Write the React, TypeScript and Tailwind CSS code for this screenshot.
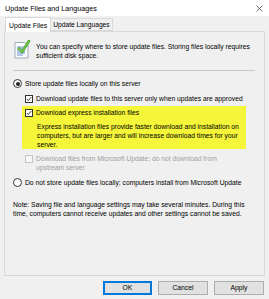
function DocIcon() {
  return (
    <svg width="18" height="20" viewBox="0 0 18 20">
      <path d="M2 3.5h10l3 3V19H2z" fill="#fbfcfd" stroke="#8a97a6" strokeWidth="0.8" />
      <path d="M4 8h8M4 10h8M4 12h8M4 14h8M4 16h6" stroke="#5a86c6" strokeWidth="0.9" />
      <path d="M6 9.5l3 3.5 7-11" fill="none" stroke="#3a9a2a" strokeWidth="2.6" strokeLinecap="round" strokeLinejoin="round" />
      <path d="M6 9.5l3 3.5 7-11" fill="none" stroke="#7fd34e" strokeWidth="1.2" strokeLinecap="round" strokeLinejoin="round" />
    </svg>
  );
}

function Check({ disabled = false }: { disabled?: boolean }) {
  return (
    <span
      className={`w-[8px] h-[8px] shrink-0 border flex items-center justify-center ${
        disabled ? "border-[#c4c4c4] bg-[#f7f7f7]" : "border-[#333] bg-white"
      }`}
    />
  );
}

function Checked() {
  return (
    <span className="w-[8px] h-[8px] shrink-0 border border-[#333] bg-white flex items-center justify-center">
      <svg width="6" height="6" viewBox="0 0 6 6">
        <path d="M0.8 3l1.5 1.6L5.3 1" fill="none" stroke="#222" strokeWidth="0.9" />
      </svg>
    </span>
  );
}

function Radio({ on }: { on?: boolean }) {
  return (
    <span className="w-[9px] h-[9px] shrink-0 rounded-full border border-[#333] bg-white flex items-center justify-center">
      {on && <span className="w-[4px] h-[4px] rounded-full bg-[#222]" />}
    </span>
  );
}

export default function App() {
  return (
    <div className="w-[269px] h-[299px] bg-[#f0f0f0] font-['Liberation_Sans',sans-serif] text-[6.75px] leading-[9px] text-black flex flex-col overflow-hidden">
      {/* Title bar */}
      <div className="h-[16px] bg-white flex items-center justify-between pl-[5px] pr-[6px] shrink-0">
        <span className="text-[7.2px]">Update Files and Languages</span>
        <svg width="7" height="7" viewBox="0 0 7 7">
          <path d="M0.5 0.5l6 6M6.5 0.5l-6 6" stroke="#333" strokeWidth="0.7" />
        </svg>
      </div>

      {/* Tabs */}
      <div className="flex items-end pl-[5px] h-[15px] shrink-0">
        <div className="relative z-10 -mb-px h-[15px] bg-white border border-b-0 border-[#d9d9d9] px-[3px] flex items-center text-[6.8px]">
          Update Files
        </div>
        <div className="h-[13px] border border-l-0 border-[#d9d9d9] px-[2px] flex items-center text-[6.7px] bg-[#f0f0f0]">
          Update Languages
        </div>
      </div>

      {/* Panel */}
      <div className="mx-[4px] h-[245px] border border-[#d9d9d9] bg-[#f0f0f0] shrink-0 flex flex-col pl-[8px] pr-[9px]">
        <div className="flex items-start gap-[5px] mt-[7px]">
          <DocIcon />
          <div className="mt-[3px]">
            You can specify where to store update files. Storing files locally requires
            <br />
            sufficient disk space.
          </div>
        </div>

        <div className="h-px bg-[#c8c8c8] mt-[10px]" />

        <div className="flex items-center gap-[3px] mt-[8px]">
          <Radio on />
          <span>Store update files locally on this server</span>
        </div>

        <div className="flex items-center gap-[3px] mt-[6px] ml-[12px]">
          <Checked />
          <span>Download update files to this server only when updates are approved</span>
        </div>

        <div className="mt-[3px] ml-[9px] mr-[9px] bg-[#f5f53a] pl-[3px] pt-[2px] pb-[0px]">
          <div className="flex items-center gap-[3px]">
            <Checked />
            <span>Download express installation files</span>
          </div>
          <div className="ml-[12px] mt-[5px]">
            Express installation files provide faster download and installation on
            <br />
            computers, but are larger and will increase download times for your
            <br />
            server.
          </div>
        </div>

        <div className="flex items-start gap-[3px] mt-[5px] ml-[12px] text-[#a0a0a0]">
          <span className="mt-[1px]">
            <Check disabled />
          </span>
          <span>
            Download files from Microsoft Update; do not download from
            <br />
            upstream server
          </span>
        </div>

        <div className="flex items-center gap-[3px] mt-[6px]">
          <Radio />
          <span>Do not store update files locally; computers install from Microsoft Update</span>
        </div>

        <div className="mt-[13px]">
          Note: Saving file and language settings may take several minutes. During this
          <br />
          time, computers cannot receive updates and other settings cannot be saved.
        </div>
      </div>

      {/* Buttons */}
      <div className="flex justify-end gap-[6px] pr-[5px] mt-[5px]">
        <button className="w-[49px] h-[14px] bg-[#e1e1e1] border-2 border-[#0078d7] text-[6.8px] leading-none">OK</button>
        <button className="w-[50px] h-[14px] bg-[#e1e1e1] border border-[#adadad] text-[6.8px] leading-none">Cancel</button>
        <button className="w-[50px] h-[14px] bg-[#e1e1e1] border border-[#adadad] text-[6.8px] leading-none">Apply</button>
      </div>
    </div>
  );
}
